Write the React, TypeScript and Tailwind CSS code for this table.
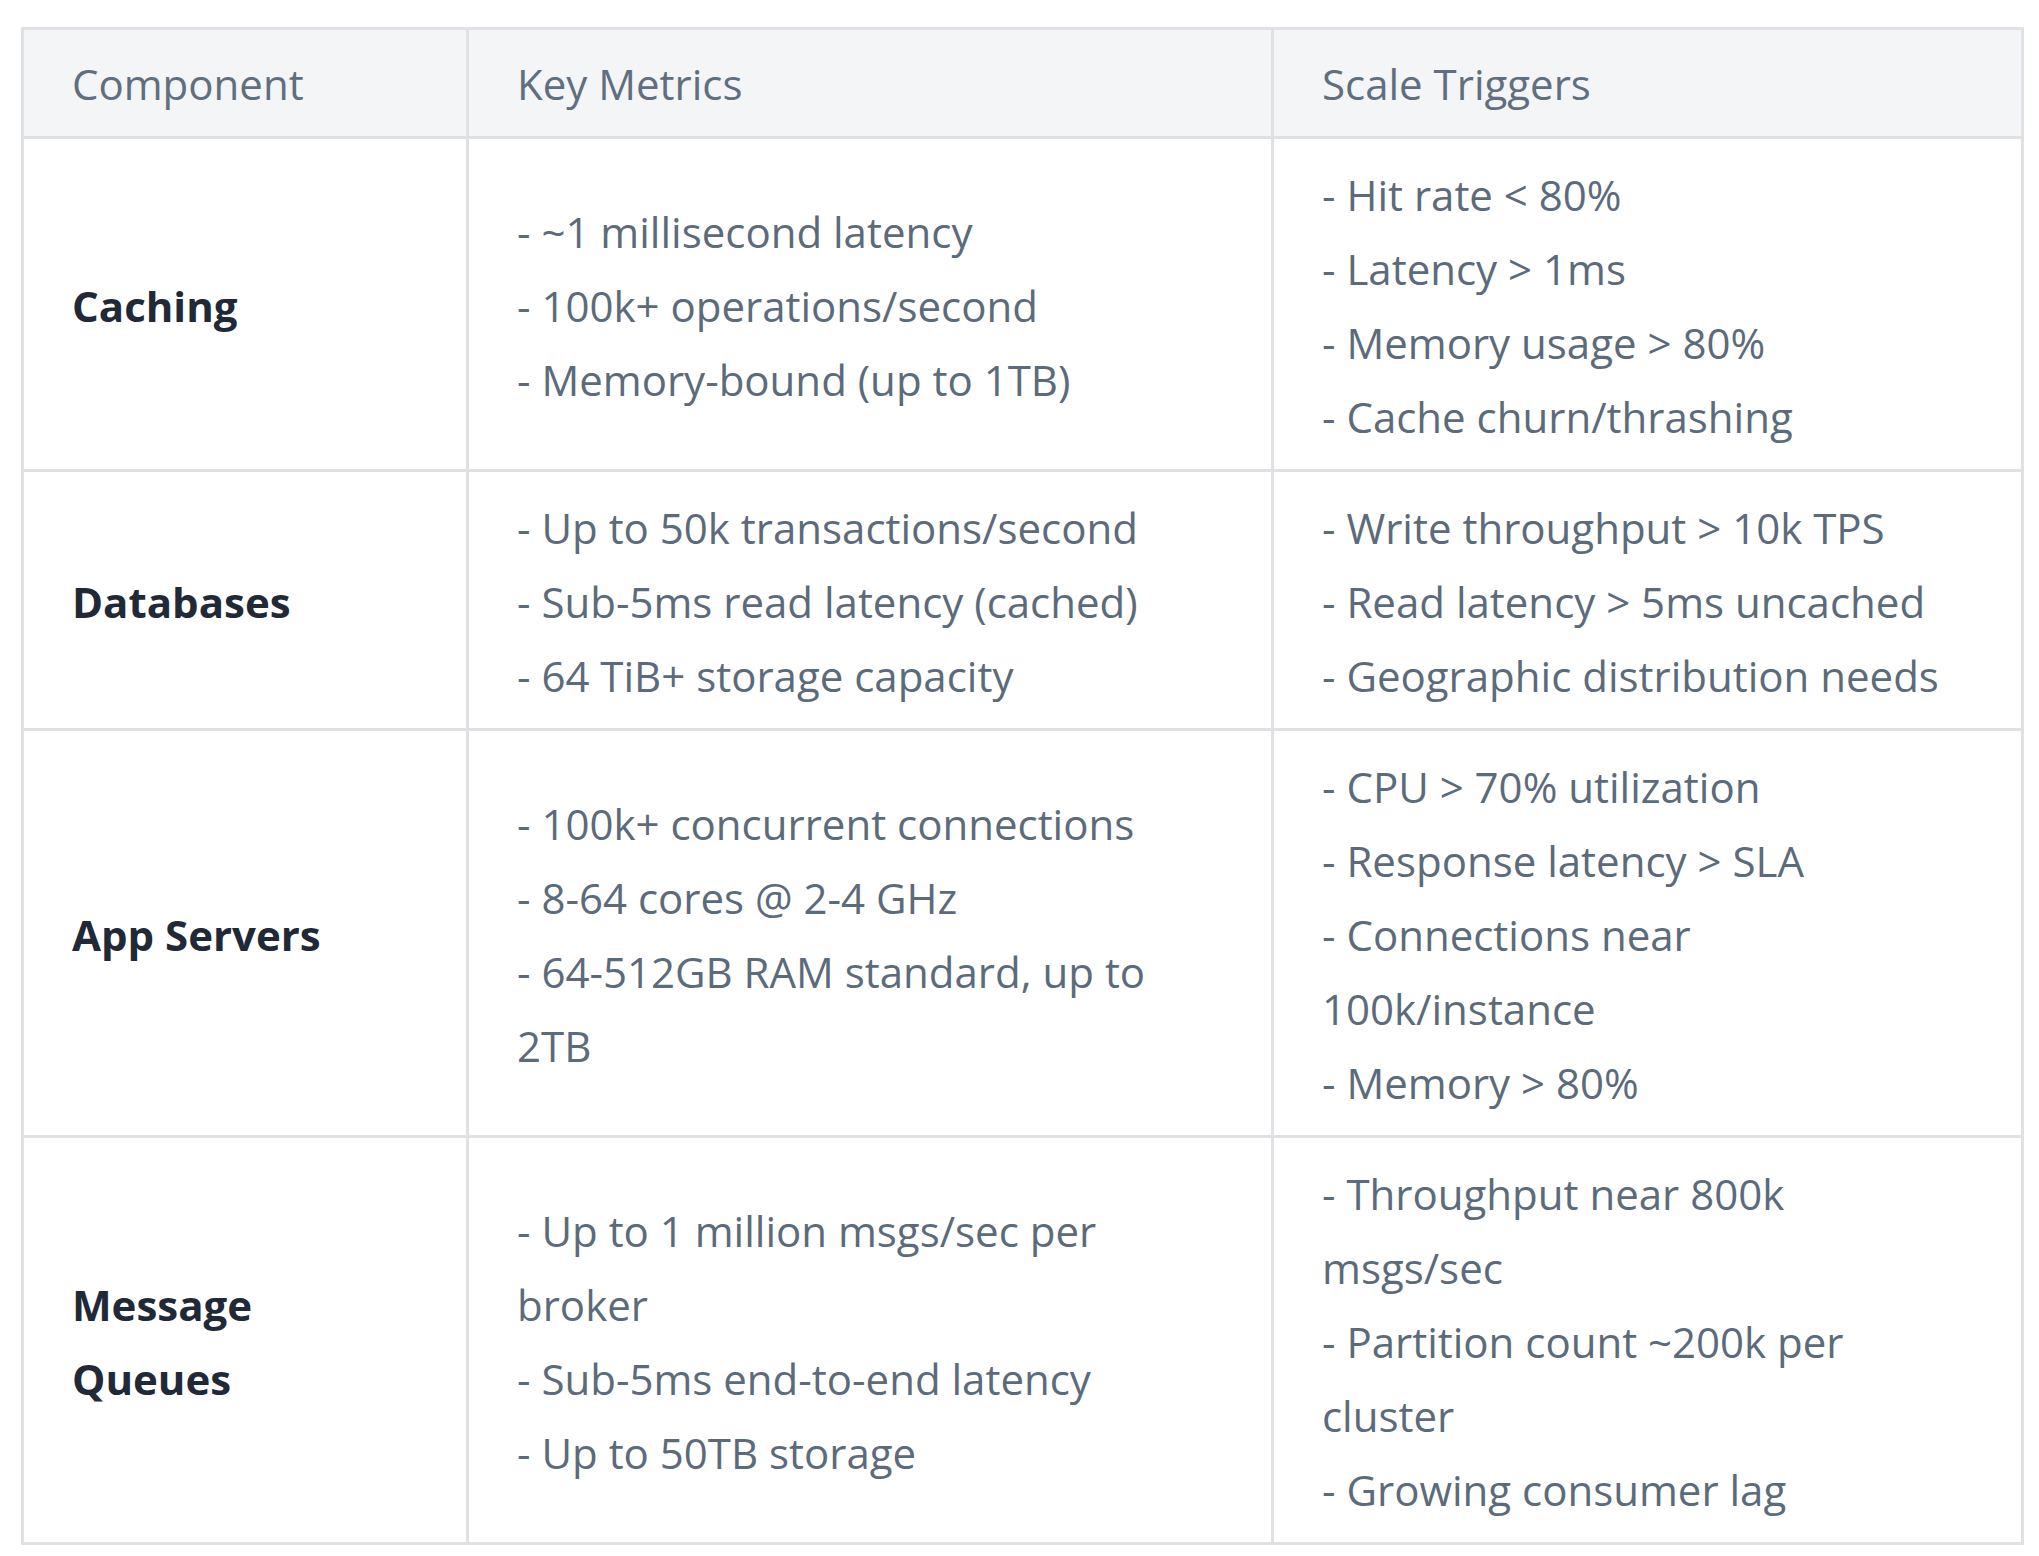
import React from "react";

type Row = { name: string[]; metrics: string[]; triggers: string[] };

const rows: Row[] = [
  {
    name: ["Caching"],
    metrics: ["- ~1 millisecond latency", "- 100k+ operations/second", "- Memory-bound (up to 1TB)"],
    triggers: ["- Hit rate < 80%", "- Latency > 1ms", "- Memory usage > 80%", "- Cache churn/thrashing"],
  },
  {
    name: ["Databases"],
    metrics: ["- Up to 50k transactions/second", "- Sub-5ms read latency (cached)", "- 64 TiB+ storage capacity"],
    triggers: ["- Write throughput > 10k TPS", "- Read latency > 5ms uncached", "- Geographic distribution needs"],
  },
  {
    name: ["App Servers"],
    metrics: ["- 100k+ concurrent connections", "- 8-64 cores @ 2-4 GHz", "- 64-512GB RAM standard, up to", "2TB"],
    triggers: ["- CPU > 70% utilization", "- Response latency > SLA", "- Connections near", "100k/instance", "- Memory > 80%"],
  },
  {
    name: ["Message", "Queues"],
    metrics: ["- Up to 1 million msgs/sec per", "broker", "- Sub-5ms end-to-end latency", "- Up to 50TB storage"],
    triggers: ["- Throughput near 800k", "msgs/sec", "- Partition count ~200k per", "cluster", "- Growing consumer lag"],
  },
];

function Lines({ lines }: { lines: string[] }) {
  return (
    <>
      {lines.map((l, i) => (
        <div key={i} className="whitespace-nowrap">
          {l}
        </div>
      ))}
    </>
  );
}

export default function App() {
  return (
    <div
      className="min-h-[1556px] w-[2039px] bg-white pt-[27px] pl-[21px]"
      style={{ fontFamily: '"Open Sans", "Noto Sans", sans-serif' }}
    >
      <table className="w-[2000px] table-fixed border-collapse border-[3px] border-[#dfe1e4] text-[42px] leading-[74px]">
        <colgroup>
          <col className="w-[445px]" />
          <col className="w-[805px]" />
          <col className="w-[750px]" />
        </colgroup>
        <thead>
          <tr className="bg-[#f4f5f7] text-[#5f6f7f]">
            <th className="border-[3px] border-[#dfe1e4] px-[48px] pt-[17px] pb-[15px] text-left font-normal">Component</th>
            <th className="border-[3px] border-[#dfe1e4] px-[48px] pt-[17px] pb-[15px] text-left font-normal">Key Metrics</th>
            <th className="border-[3px] border-[#dfe1e4] px-[48px] pt-[17px] pb-[15px] text-left font-normal">Scale Triggers</th>
          </tr>
        </thead>
        <tbody>
          {rows.map((r, i) => (
            <tr key={i}>
              <td className="border-[3px] border-[#dfe1e4] px-[48px] pt-[19px] pb-[15px] align-middle font-bold text-[#1f2937]">
                <Lines lines={r.name} />
              </td>
              <td className="border-[3px] border-[#dfe1e4] px-[48px] pt-[19px] pb-[15px] align-middle text-[#5b6b7b]">
                <Lines lines={r.metrics} />
              </td>
              <td className="border-[3px] border-[#dfe1e4] px-[48px] pt-[19px] pb-[15px] align-middle text-[#5b6b7b]">
                <Lines lines={r.triggers} />
              </td>
            </tr>
          ))}
        </tbody>
      </table>
    </div>
  );
}
